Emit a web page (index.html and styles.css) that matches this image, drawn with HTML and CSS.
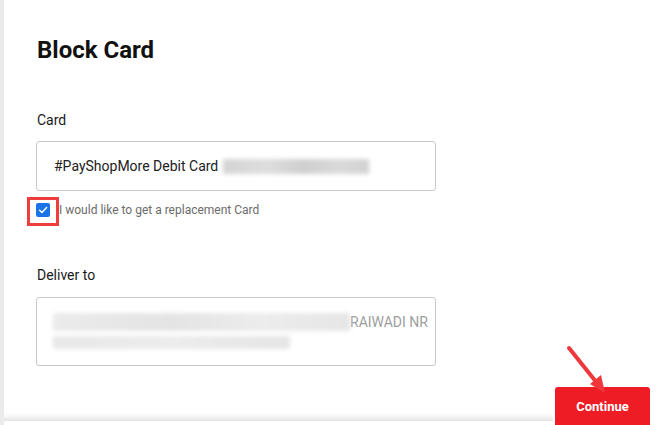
FILE: index.html
```html
<!DOCTYPE html>
<html>
<head>
<meta charset="utf-8">
<link rel="stylesheet" href="styles.css">
</head>
<body>
<div class="page">
  <div class="sidebar"></div>
  <div class="main">
    <div class="content">
      <h1 class="title">Block Card</h1>
      <div class="label label-card">Card</div>
      <div class="field field-card">
        <span class="field-text">#PayShopMore Debit Card</span>
        <span class="blur blur-card"></span>
      </div>
      <div class="check-row">
        <span class="checkbox">
          <svg width="14" height="14" viewBox="0 0 14 14"><path d="M3.6 7.2 L6 9.4 L10.6 4.6" fill="none" stroke="#fff" stroke-width="1.5" stroke-linecap="round" stroke-linejoin="round"/></svg>
          <span class="highlight"></span>
        </span>
        <span class="check-text">I would like to get a replacement Card</span>
      </div>
      <div class="label label-deliver">Deliver to</div>
      <div class="field field-address">
        <div class="addr-line"><span class="blur blur-addr1"></span><span class="addr-text">RAIWADI NR</span></div>
        <div class="addr-line"><span class="blur blur-addr2"></span></div>
      </div>
    </div>
    <div class="footer">
      <div class="footer-shadow"></div>
      <button class="btn-continue">Continue</button>
    </div>
    <svg class="arrow" width="60" height="60" viewBox="0 0 60 60">
      <line x1="6" y1="5" x2="34" y2="40" stroke="#f0383c" stroke-width="4" stroke-linecap="round"/>
      <polygon points="42,50 27,41 38,32" fill="#f0383c"/>
    </svg>
  </div>
</div>
</body>
</html>
```
FILE: styles.css
```css
html, body {
  margin: 0;
  padding: 0;
  background: #ffffff;
}
body {
  width: 661px;
  height: 425px;
  overflow: hidden;
  font-family: Roboto, "Liberation Sans", Arial, sans-serif;
}
.page {
  display: flex;
  height: 425px;
}
.sidebar {
  width: 4px;
  flex: 0 0 4px;
  background: #ebebeb;
}
.main {
  flex: 1;
  position: relative;
  display: flex;
  flex-direction: column;
}
.content {
  padding-left: 32px;
  width: 400px;
}
.title {
  margin: 36px 0 0 1px;
  font-size: 24px;
  line-height: 28px;
  font-weight: 700;
  color: #111111;
}
.label {
  font-size: 14px;
  line-height: 20px;
  font-weight: 400;
  color: #1a1a1a;
  padding-left: 1px;
}
.label-card {
  margin-top: 46px;
}
.field {
  box-sizing: border-box;
  width: 400px;
  border: 1px solid #c8c8c8;
  border-radius: 3px;
  background: #fff;
}
.field-card {
  margin-top: 11px;
  height: 50px;
  display: flex;
  align-items: center;
  padding-left: 17px;
}
.field-text {
  font-size: 14px;
  color: #212121;
}
.blur {
  display: inline-block;
  filter: blur(2px);
}
.blur-card {
  margin-left: 5px;
  width: 146px;
  height: 15px;
  background: linear-gradient(90deg, #d4d4d4, #dedede 30%, #cfcfcf 55%, #dadada 80%, #d2d2d2);
}
.check-row {
  margin-top: 12px;
  display: flex;
  align-items: center;
  height: 14px;
}
.checkbox {
  position: relative;
  width: 14px;
  height: 14px;
  border-radius: 2px;
  background: #1a73e8;
  display: flex;
}
.highlight {
  position: absolute;
  left: -9px;
  top: -6px;
  width: 26px;
  height: 23px;
  border: 3px solid #ee3d3d;
}
.check-text {
  margin-left: 9px;
  font-size: 12px;
  color: #6b6b6b;
}
.label-deliver {
  margin-top: 48px;
}
.field-address {
  margin-top: 12px;
  height: 69px;
  padding: 14px 6px 0 16px;
}
.addr-line {
  height: 20px;
  display: flex;
  align-items: center;
}
.blur-addr1 {
  width: 297px;
  height: 18px;
  background: linear-gradient(90deg, #ebebeb, #e4e4e4 40%, #ececec 70%, #e6e6e6);
}
.blur-addr2 {
  width: 237px;
  height: 13px;
  background: linear-gradient(90deg, #e8e8e8, #ececec 50%, #e5e5e5);
}
.addr-text {
  font-size: 14px;
  color: #9e9e9e;
}
.footer {
  margin-top: auto;
  display: flex;
  align-items: flex-start;
  height: 38px;
}
.footer-shadow {
  width: 549px;
  height: 8px;
  margin-top: 26px;
  background: linear-gradient(180deg, #ffffff, #f4f4f4 50%, #e4e4e4);
}
.btn-continue {
  margin-left: 2px;
  width: 95px;
  height: 42px;
  border: none;
  border-radius: 3px 3px 0 0;
  background: #ee1c25;
  color: #ffffff;
  font-family: Roboto, "Liberation Sans", Arial, sans-serif;
  font-size: 13px;
  font-weight: 700;
  padding: 0 0 4px 0;
}
.arrow {
  position: absolute;
  left: 559px;
  top: 343px;
}
```
